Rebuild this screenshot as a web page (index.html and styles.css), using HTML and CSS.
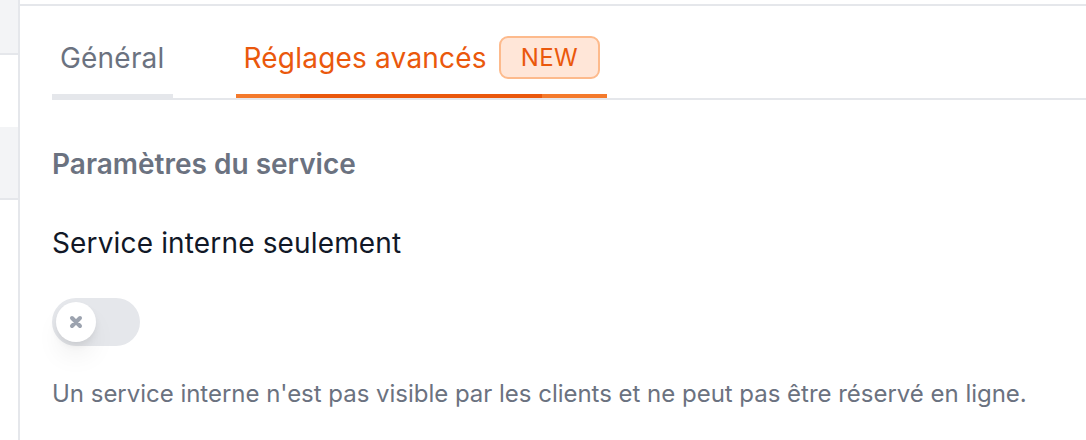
FILE: index.html
```html
<!DOCTYPE html>
<html lang="fr">
<head>
<meta charset="utf-8">
<title>Réglages avancés</title>
<link rel="stylesheet" href="styles.css">
</head>
<body>
<div class="layout">
  <aside class="sidebar">
    <div class="side-item side-item--active side-item--bordered"></div>
    <div class="side-item side-item--tall"></div>
    <div class="side-item side-item--active side-item--tall side-item--bordered"></div>
  </aside>
  <main class="main">
    <div class="panel">
      <nav class="tabs">
        <a class="tab">Général</a>
        <a class="tab tab--active">Réglages avancés <span class="badge">NEW</span></a>
      </nav>
      <section class="section">
        <h2 class="section-title">Paramètres du service</h2>
        <div class="field">
          <div class="field-label">Service interne seulement</div>
          <button class="toggle" type="button" aria-pressed="false">
            <span class="knob">
              <svg class="knob-icon" viewBox="0 0 12 12" fill="none"><path d="M4 8l2-2m0 0l2-2M6 6L4 4m2 2l2 2" stroke="currentColor" stroke-width="2" stroke-linecap="round" stroke-linejoin="round"/></svg>
            </span>
          </button>
          <p class="field-help">Un service interne n'est pas visible par les clients et ne peut pas être réservé en ligne.</p>
        </div>
      </section>
    </div>
  </main>
</div>
</body>
</html>
```

FILE: styles.css
```css
* { box-sizing: border-box; }
html, body { margin: 0; padding: 0; background: #fff; }
body {
  font-family: Inter, "Noto Sans", "Liberation Sans", sans-serif;
  color: #111827;
  width: 1086px;
  height: 440px;
  overflow: hidden;
}
.layout {
  display: flex;
  height: 440px;
}
.sidebar {
  width: 20px;
  flex: none;
  border-right: 2px solid #e5e7eb;
  display: flex;
  flex-direction: column;
}
.side-item { height: 53px; }
.side-item--tall { height: 72px; }
.side-item--active { background: #f3f4f6; }
.side-item--bordered { border-bottom: 2px solid #e5e7eb; height: 55px; }
.side-item--tall.side-item--bordered { height: 73px; }

.main {
  flex: 1;
  padding-top: 4px;
  min-width: 0;
}
.panel {
  border-top: 2px solid #e5e7eb;
  padding: 30px 0 0 32px;
}
.tabs {
  display: flex;
  gap: 63px;
  border-bottom: 2px solid #e5e7eb;
}
.tab {
  display: flex;
  align-items: center;
  height: 62px;
  padding: 0 8px 15px;
  border-bottom: 4px solid #e5e7eb;
  font-size: 28px;
  line-height: 40px;
  letter-spacing: 0.2px;
  color: #6b7280;
  text-decoration: none;
}
.tab--active {
  color: #ea580c;
  border-bottom: none;
  padding: 0 7px 19px 8px;
  background: linear-gradient(to right, #f47a2c 0, #f47a2c 64px, #ea580c 64px, #ea580c 306px, #f47a2c 306px) no-repeat left bottom / 100% 4px;
}
.badge {
  display: inline-flex;
  align-items: center;
  height: 43px;
  margin-left: 12px;
  padding: 0 20px;
  border: 2px solid #fdba8c;
  border-radius: 9px;
  background: #ffe6d8;
  color: #ea580c;
  font-size: 24px;
  font-weight: 400;
  line-height: 32px;
  letter-spacing: 0.3px;
}
.section {
  padding-top: 44px;
}
.section-title {
  margin: 0;
  font-size: 28px;
  line-height: 40px;
  font-weight: 600;
  color: #6b7280;
}
.field { margin-top: 39px; }
.field-label {
  font-size: 28px;
  line-height: 40px;
  letter-spacing: 0.15px;
  color: #111827;
}
.toggle {
  display: block;
  margin-top: 35px;
  width: 88px;
  height: 48px;
  padding: 0;
  border: 4px solid transparent;
  border-radius: 9999px;
  background: #e5e7eb;
  cursor: pointer;
}
.knob {
  display: flex;
  align-items: center;
  justify-content: center;
  width: 40px;
  height: 40px;
  border-radius: 50%;
  background: #fff;
  box-shadow: 0 16px 28px -6px rgba(0,0,0,0.10), 0 4px 8px -2px rgba(0,0,0,0.10);
}
.knob-icon {
  width: 24px;
  height: 24px;
  color: #9ca3af;
}
.field-help {
  margin: 32px 0 0;
  font-size: 24px;
  line-height: 32px;
  letter-spacing: -0.02px;
  color: #6b7280;
  white-space: nowrap;
}
```
